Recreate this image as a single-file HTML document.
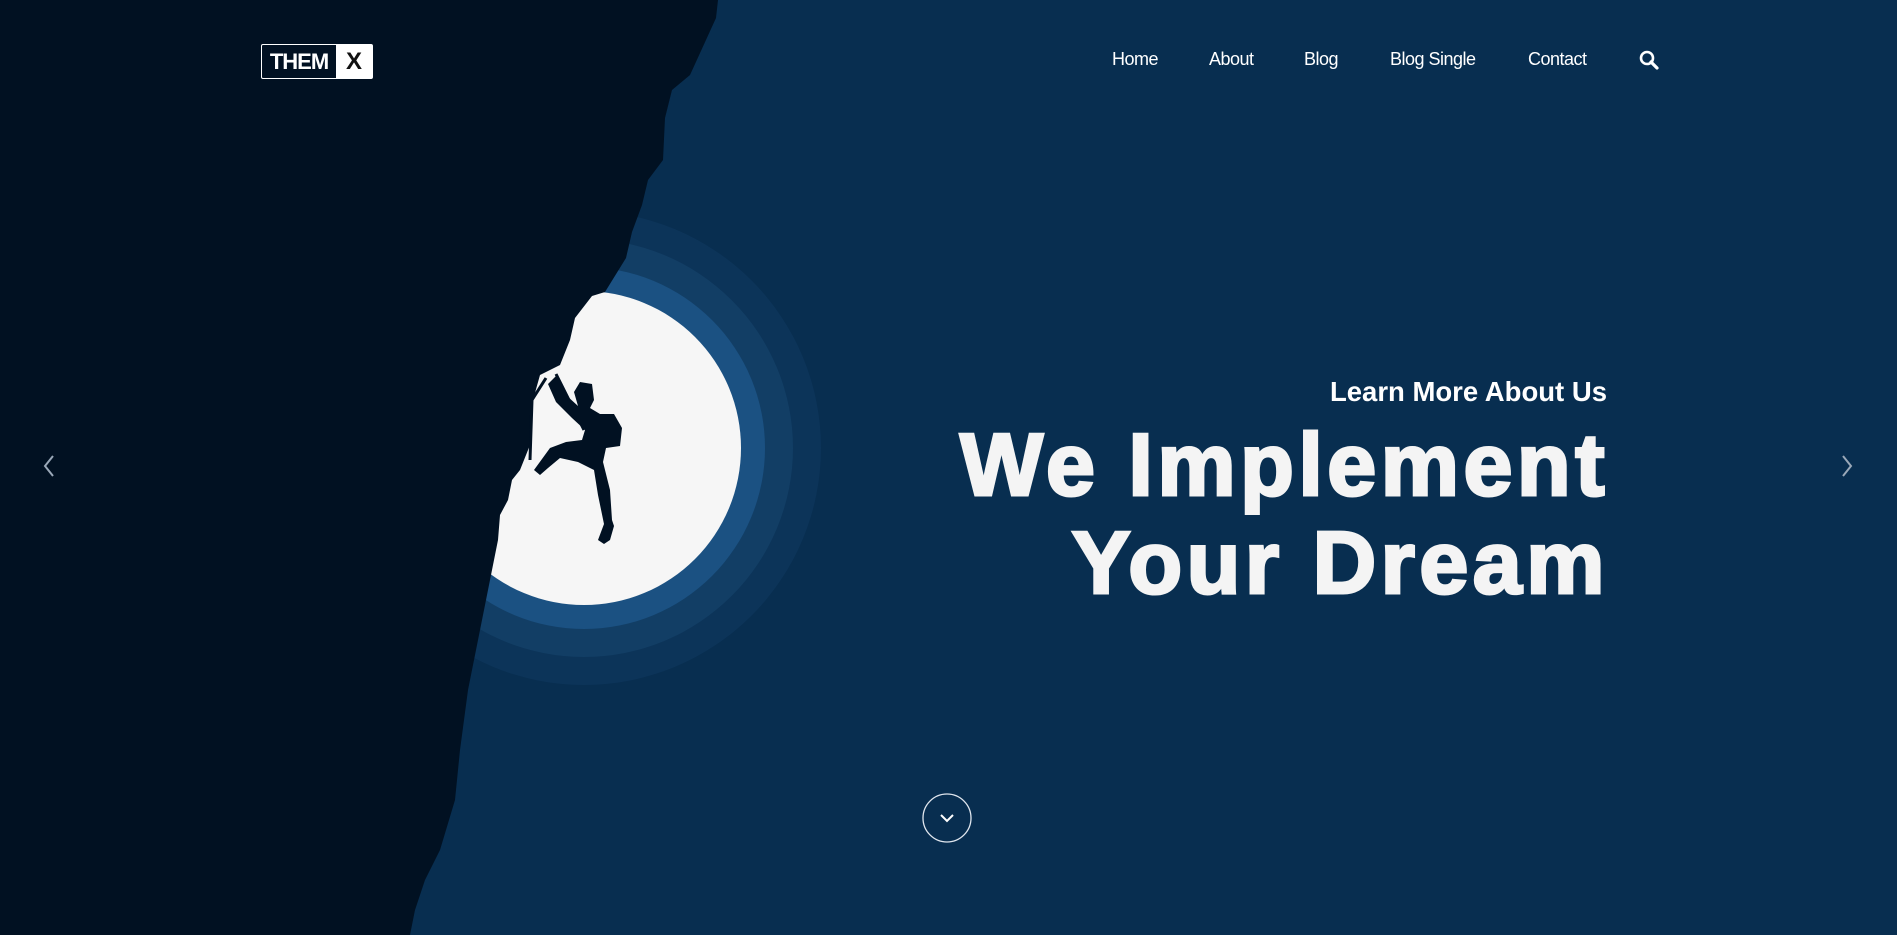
<!DOCTYPE html>
<html><head><meta charset="utf-8"><style>
html,body{margin:0;padding:0;width:1897px;height:935px;overflow:hidden;background:#082e50;font-family:"Liberation Sans",Arial,sans-serif}
svg{position:absolute;left:0;top:0}
.logo{position:absolute;left:261px;top:44px;width:110px;height:33px;border:1.5px solid #fff;border-radius:2px;display:flex;font-weight:bold}
.logo .a{flex:0 0 74px;color:#fff;font-size:22px;line-height:33px;text-align:center;letter-spacing:-1px}
.logo .b{flex:1;background:#fff;color:#111;font-size:24px;line-height:33px;text-align:center}
.nav{position:absolute;top:49px;font-size:18px;color:#fff;letter-spacing:-0.5px}
.sub{position:absolute;right:290px;top:376px;color:#fff;font-size:27.5px;font-weight:bold}
.h{position:absolute;right:288px;top:416px;color:#f4f4f4;font-size:88px;font-weight:900;line-height:98px;text-align:right;letter-spacing:4.5px;-webkit-text-stroke:3px #f4f4f4}
</style></head><body>
<svg width="1897" height="935" viewBox="0 0 1897 935">
<circle cx="584" cy="448" r="237" fill="#0c3459"/>
<circle cx="584" cy="448" r="209" fill="#123e65"/>
<circle cx="584" cy="448" r="181" fill="#1b5182"/>
<circle cx="584" cy="448" r="157" fill="#f6f6f6"/>
<path d="M0 0 L718 0 L716 18 L690 75 L672 90 L665 118 L663 160 L648 180 L642 205 L632 232 L626 258 L605 292 L592 296 L575 318 L570 340 L560 365 L540 375 L533 400 L530 445 L520 470 L512 480 L508 500 L500 515 L498 540 L492 570 L486 600 L478 640 L468 690 L460 750 L455 800 L440 850 L425 880 L415 910 L410 935 L0 935 Z" fill="#011122"/>
<path d="M548 384 L556 376 L566 395 L578 406 L574 392 L580 382 L592 384 L594 400 L590 408 L600 414 L614 414 L622 428 L620 446 L606 448 L603 462 L610 490 L612 520 L614 526 L610 540 L604 544 L598 540 L604 524 L598 495 L594 470 L578 462 L560 458 L548 468 L540 475 L534 470 L550 448 L566 442 L582 440 L585 430 L572 418 L556 402 Z" fill="#011122"/>
<path d="M546 378 L532 400 L530 460 M556 374 L584 430" stroke="#011122" stroke-width="3" fill="none"/>
<path d="M53 456 L45 466 L53 476 M1843 456 L1851 466 L1843 476" stroke="#9aa8b8" stroke-width="2" fill="none"/>
<circle cx="947" cy="818" r="24" stroke="#e0e6ee" stroke-width="1.3" fill="none"/>
<path d="M941 815 L947 821 L953 815" stroke="#fff" stroke-width="2" fill="none"/>
<circle cx="1647" cy="58" r="6" stroke="#fff" stroke-width="2.6" fill="none"/>
<path d="M1651 62 L1657 68" stroke="#fff" stroke-width="3.2" stroke-linecap="round"/>
</svg>
<div class="logo"><div class="a">THEM</div><div class="b">X</div></div>
<div class="nav" style="left:1112px">Home</div>
<div class="nav" style="left:1209px">About</div>
<div class="nav" style="left:1304px">Blog</div>
<div class="nav" style="left:1390px">Blog Single</div>
<div class="nav" style="left:1528px">Contact</div>
<div class="sub">Learn More About Us</div>
<div class="h">We Implement<br>Your Dream</div>
</body></html>
